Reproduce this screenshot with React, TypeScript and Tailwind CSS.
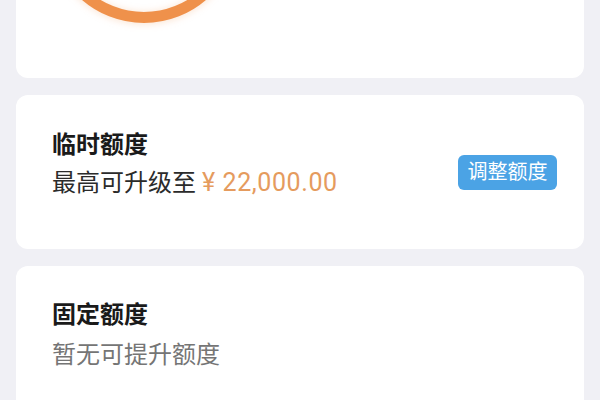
import React from 'react';

const font = { fontFamily: "Roboto, 'Noto Sans CJK SC', sans-serif" };

const App: React.FC = () => {
    return (
        <div className="w-[600px] h-[400px] overflow-hidden bg-[#f0f0f5] px-4 flex flex-col gap-[17px]" style={font}>
            {/* top card with the gauge ring, mostly scrolled off */}
            <div className="h-[78px] shrink-0 bg-white rounded-b-xl overflow-hidden">
                <svg width="568" height="78" viewBox="0 0 568 78">
                    <defs>
                        <filter id="glow" x="-20%" y="-20%" width="140%" height="140%">
                            <feGaussianBlur stdDeviation="3" />
                        </filter>
                    </defs>
                    <circle cx="128" cy="-72" r="90" fill="none" stroke="#f6c49a" strokeOpacity="0.35" strokeWidth="14" filter="url(#glow)" />
                    <circle cx="128" cy="-72" r="89.5" fill="none" stroke="#ef914b" strokeWidth="11" />
                </svg>
            </div>

            <div className="h-[154px] shrink-0 bg-white rounded-xl pl-9 pr-[27px] flex justify-between">
                <div className="pt-[31px]">
                    <h3 className="text-[24px] leading-[38px] font-bold text-[#1a1a1a]">临时额度</h3>
                    <p className="text-[24px] leading-[38px] text-[#2b2b2b]">
                        最高可升级至 <span className="text-[25px] tracking-[0.6px] text-[#e59b5e]">¥ 22,000.00</span>
                    </p>
                </div>
                <button className="self-center w-[99px] h-[35px] rounded-md bg-[#4ba3e5] text-white text-[20px] leading-none">
                    调整额度
                </button>
            </div>

            <div className="h-[160px] shrink-0 bg-white rounded-xl pl-9 pt-[30px]">
                <h3 className="text-[24px] leading-[38px] font-bold text-[#1a1a1a]">固定额度</h3>
                <p className="mt-[2px] text-[24px] leading-[38px] text-[#757575]">暂无可提升额度</p>
            </div>
        </div>
    );
};

export default App;
